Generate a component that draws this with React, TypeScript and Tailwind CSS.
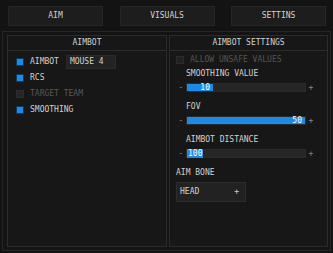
import React from 'react';

const font = "font-['DejaVu_Sans_Mono','Liberation_Mono',monospace]";

function Check({ on, label, dim }: { on?: boolean; label: string; dim?: boolean }) {
  return (
    <div className="flex items-center gap-[6px] h-[16px]">
      <span
        className={`w-[8px] h-[8px] border ${on ? 'bg-[#1c8ae6] border-[#0f3a5e]' : 'bg-[#262626] border-[#2c2c2c]'}`}
      />
      <span className={dim ? 'text-[#585858]' : 'text-[#d2d2d2]'}>{label}</span>
    </div>
  );
}

function Slider({ pct, value, selected }: { pct: number; value: string; selected?: boolean }) {
  return (
    <div className="flex items-center h-[9px] mt-[4px]">
      <span className="w-[10px] text-center text-[#8a8a8a] leading-[9px]">-</span>
      <div className="relative w-[120px] h-[9px] bg-[#262626] border border-[#2a2a2a]">
        {selected ? (
          <span className="absolute left-0 top-[-1px] h-[9px] px-[1px] bg-[#1c8ae6] text-white leading-[9px]">
            {value}
          </span>
        ) : (
          <div
            className="h-full bg-[#1c8ae6] flex items-center justify-end pr-[3px] text-white leading-[9px]"
            style={{ width: `${pct}%` }}
          >
            {value}
          </div>
        )}
      </div>
      <span className="w-[10px] text-center text-[#8a8a8a] leading-[9px]">+</span>
    </div>
  );
}

export default function App() {
  return (
    <div className={`w-[333px] h-[253px] bg-[#131313] overflow-hidden text-[8px] leading-[10px] ${font}`}>
      {/* tab buttons */}
      <div className="flex justify-between pl-[8px] pr-[7px] pt-[6px]">
        {['AIM', 'VISUALS', 'SETTINS'].map((t) => (
          <div
            key={t}
            className="w-[95px] h-[20px] bg-[#1d1d1d] border border-[#262626] flex items-center justify-center text-[#d2d2d2]"
          >
            {t}
          </div>
        ))}
      </div>

      {/* outer frame */}
      <div className="mt-[5px] ml-[2px] w-[329px] h-[220px] border border-[#262626] bg-[#141414] pl-[4px] pt-[3px] flex gap-[2px]">
        {/* left panel */}
        <div className="w-[160px] h-[212px] border border-[#2c2c2c] bg-[#171717] flex flex-col">
          <div className="h-[15px] border-b border-[#2c2c2c] flex items-center justify-center text-[#d2d2d2]">
            AIMBOT
          </div>
          <div className="flex flex-col pl-[8px] pt-[3px]">
            <div className="flex items-center gap-[7px]">
              <Check on label="AIMBOT" />
              <div className="w-[50px] h-[14px] bg-[#232323] border border-[#2a2a2a] flex items-center pl-[3px] text-[#d2d2d2]">
                MOUSE 4
              </div>
            </div>
            <Check on label="RCS" />
            <Check label="TARGET TEAM" dim />
            <Check on label="SMOOTHING" />
          </div>
        </div>

        {/* right panel */}
        <div className="w-[159px] h-[212px] border border-[#2c2c2c] bg-[#171717] flex flex-col">
          <div className="h-[15px] border-b border-[#2c2c2c] flex items-center justify-center text-[#d2d2d2]">
            AIMBOT SETTINGS
          </div>
          <div className="flex flex-col pl-[6px] pt-[4px]">
            <div className="flex items-center gap-[6px] h-[10px]">
              <span className="w-[8px] h-[8px] bg-[#222] border border-[#2c2c2c]" />
              <span className="text-[#555]">ALLOW UNSAFE VALUES</span>
            </div>
            <div className="pl-[10px] mt-[4px] text-[#d2d2d2]">SMOOTHING VALUE</div>
            <Slider pct={22} value="10" />
            <div className="pl-[10px] mt-[10px] text-[#d2d2d2]">FOV</div>
            <Slider pct={100} value="50" />
            <div className="pl-[10px] mt-[10px] text-[#d2d2d2]">AIMBOT DISTANCE</div>
            <Slider pct={0} value="100" selected />
            <div className="mt-[10px] text-[#d2d2d2]">AIM BONE</div>
            <div className="mt-[4px] w-[70px] h-[20px] bg-[#222] border border-[#2c2c2c] flex items-center justify-between pl-[3px] pr-[6px] text-[#d2d2d2]">
              <span>HEAD</span>
              <span>+</span>
            </div>
          </div>
        </div>
      </div>
    </div>
  );
}
